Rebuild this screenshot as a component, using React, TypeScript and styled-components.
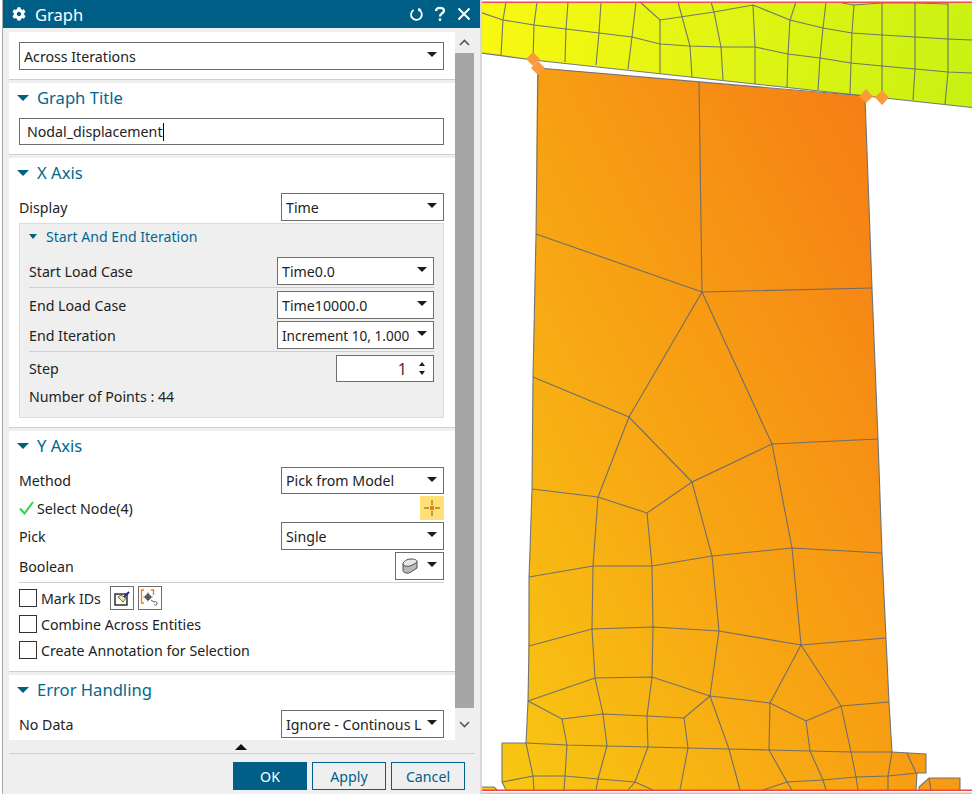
import React from "react";
import styled, { createGlobalStyle } from "styled-components";
import { FaCog } from "react-icons/fa";

const Global = createGlobalStyle`
  html, body { margin: 0; padding: 0; background: #fff; }
  body { font-family: "Noto Sans", "Open Sans", Arial, sans-serif; }
  * { box-sizing: border-box; }
`;

const Page = styled.div`
  width: 972px; height: 794px; display: flex; overflow: hidden; background: #fff; padding-left: 2px;
`;
const Dialog = styled.div`
  width: 478px; height: 794px; display: flex; flex-direction: column; background: #efefef;
  border-left: 1px solid #a9a9a9; flex: none;
`;
const TitleBar = styled.div`
  height: 28px; background: #005f87; color: #fff; display: flex; align-items: center; padding: 0 4px 0 9px; flex: none;
`;
const TitleText = styled.span`
  font-size: 16.5px; margin-left: 9px; flex: 1; margin-top: 1px;
`;
const TitleIcons = styled.div`
  display: flex; align-items: center; gap: 0;
`;
const TitleIcon = styled.span`
  width: 24px; height: 28px; display: flex; align-items: center; justify-content: center;
`;
const Body = styled.div`
  height: 712px; padding: 4px 5px 0 6px; display: flex; flex: none;
`;
const Form = styled.div`
  width: 446px; display: flex; flex-direction: column;
`;
const Section = styled.section<{ $pad?: number; $sep?: boolean }>`
  background: #fff; padding: 0 11px ${p => p.$pad ?? 9}px 10px;
  ${p => (p.$sep === false ? "" : "border-bottom: 1px solid #cfcfcf; margin-bottom: 3px;")}
`;
const FirstPad = styled.div`
  height: 10px;
`;
const Header = styled.div`
  height: 30px; display: flex; align-items: center; margin-left: -2px; padding-bottom: 1px;
  color: #00688f; font-size: 16.6px;
`;
const Caret = styled.span<{ $small?: boolean }>`
  width: 0; height: 0; flex: none; display: block;
  border-left: ${p => (p.$small ? 4.5 : 6)}px solid transparent;
  border-right: ${p => (p.$small ? 4.5 : 6)}px solid transparent;
  border-top: ${p => (p.$small ? 5 : 6)}px solid #00607f;
  margin-right: ${p => (p.$small ? 9 : 8)}px;
`;
const Row = styled.div<{ $h?: number; $mt?: number }>`
  display: flex; align-items: center; justify-content: space-between;
  height: ${p => p.$h ?? 28}px; margin-top: ${p => p.$mt ?? 0}px;
`;
const Label = styled.span<{ $ml?: number }>`
  font-size: 14.2px; color: #222; white-space: nowrap; margin-left: ${p => p.$ml ?? 0}px;
`;
const SelectBox = styled.div<{ $w?: number }>`
  width: ${p => (p.$w ? `${p.$w}px` : "100%")}; height: 100%; border: 1px solid #6e6e6e; background: #fff;
  display: flex; align-items: center; padding: 0 6px 0 4px; flex: none;
`;
const SelectText = styled.span<{ $fs?: number }>`
  flex: 1; font-size: ${p => p.$fs ?? 14.2}px; color: #222; white-space: nowrap; overflow: hidden;
`;
const DropArrow = styled.span`
  width: 0; height: 0; flex: none; margin-left: 4px; margin-top: -3px;
  border-left: 5px solid transparent; border-right: 5px solid transparent; border-top: 5px solid #1c1c1c;
`;
const TextInput = styled.div`
  height: 27px; margin-top: 5px; border: 1px solid #6e6e6e; background: #fff; display: flex; align-items: center; padding-left: 7px;
  font-size: 14.2px; color: #222;
`;
const Cursor = styled.span`
  display: inline-block; width: 1px; height: 18px; background: #000;
`;
const Group = styled.div`
  margin-top: 2px; height: 195px; background: #efefef; border: 1px solid #dcdcdc; padding: 0 9px;
`;
const GroupHeader = styled.div`
  height: 26px; display: flex; align-items: center; color: #00688f; font-size: 14.1px;
  margin: 0 0 7px 0; padding-bottom: 2px;
`;
const Rule = styled.div<{ $mt?: number; $mb?: number; $c?: string }>`
  height: 1px; background: ${p => p.$c ?? "#cfcfcf"}; margin-top: ${p => p.$mt ?? 0}px; margin-bottom: ${p => p.$mb ?? 0}px;
`;
const Spinner = styled.div`
  width: 98px; height: 27px; border: 1px solid #6e6e6e; background: #fff; display: flex; align-items: center; justify-content: flex-end;
  padding-right: 8px; font-size: 16px; color: #5a2b33;
`;
const SpinValue = styled.span`
  margin-right: 12px;
`;
const SpinArrows = styled.span`
  display: flex; flex-direction: column; gap: 5px;
`;
const SpinUp = styled.span`
  display: block; width: 0; height: 0; border-left: 3.5px solid transparent; border-right: 3.5px solid transparent; border-bottom: 4px solid #1c1c1c;
`;
const SpinDown = styled.span`
  display: block; width: 0; height: 0; border-left: 3.5px solid transparent; border-right: 3.5px solid transparent; border-top: 4px solid #1c1c1c;
`;
const NodeLabel = styled.span`
  display: flex; align-items: center; gap: 3px;
`;
const Crosshair = styled.div`
  width: 24px; height: 24px; background: #ffdf76; display: flex; align-items: center; justify-content: center;
`;
const CheckRow = styled.div<{ $mt?: number }>`
  display: flex; align-items: center; height: 18px; margin-top: ${p => p.$mt ?? 0}px; gap: 4px;
`;
const CheckBox = styled.span`
  width: 18px; height: 18px; border: 1px solid #333; background: #fff; flex: none;
`;
const ToolRow = styled.div`
  display: flex; align-items: center; height: 24px; margin-top: 3px;
`;
const ToolBtn = styled.span<{ $ml: number }>`
  width: 24px; height: 24px; border: 1px solid #6e6e6e; background: #fff; margin-left: ${p => p.$ml}px;
  display: flex; align-items: center; justify-content: center; flex: none;
`;
const Scroll = styled.div`
  width: 20px; display: flex; flex-direction: column; align-items: stretch;
`;
const ScrollCap = styled.div<{ $h: number }>`
  height: ${p => p.$h}px; display: flex; align-items: center; justify-content: center; flex: none; padding-right: 1px;
`;
const Thumb = styled.div`
  height: 655px; background: #a6a6a6; width: 19px; flex: none;
`;
const Footer = styled.div`
  flex: 1; padding: 0 5px 0 6px; display: flex; flex-direction: column;
`;
const Collapse = styled.div`
  height: 14px; width: 466px; display: flex; justify-content: center; align-items: center;
  border-bottom: 1px solid #cfcfcf; padding-top: 1px;
`;
const CollapseArrow = styled.span`
  width: 0; height: 0; border-left: 6px solid transparent; border-right: 6px solid transparent; border-bottom: 6px solid #111; margin-right: 2px;
`;
const Buttons = styled.div`
  display: flex; justify-content: flex-end; gap: 5px; margin-top: 8px; padding-right: 10px;
`;
const Btn = styled.button<{ $primary?: boolean }>`
  width: 74px; height: 28px; padding: 0; font: inherit; font-size: 14.2px;
  border: 1px solid #00608a; background: ${p => (p.$primary ? "#005f87" : "#efefef")};
  color: ${p => (p.$primary ? "#fff" : "#00608a")};
`;
const Viewport = styled.div`
  flex: 1; height: 794px; background: #fff; border-left: 2px solid #d8d8d8; overflow: hidden;
`;
const MeshSvg = styled.svg`
  display: block; margin-left: -482px;
`;

const Select: React.FC<{ text: string; w?: number; fs?: number }> = ({ text, w, fs }) => (
  <SelectBox $w={w}>
    <SelectText $fs={fs}>{text}</SelectText>
    <DropArrow />
  </SelectBox>
);

const mesh: string[] = [
  "481,12.5 503,20 534,25 566,29 599,33 632,37 660,44 690,46 721,47 755,47 788,54 820,58 851,63 882,66 915,69 948,72 972,73",
  "640,2 660,20 714,12 753,5 790,20 823,28 852,33 882,35 915,37 948,39 972,40",
  "842,3 854,5 882,3 915,3 948,4",
  "506,2 503,20 501,55", "537,2 534,25 533,62", "568,2 566,29 565,62", "601,2 599,33 596,65",
  "636,2 632,37 628,69", "660,20 660,44 660,73", "678,2 690,46 692,77", "711,2 714,12 721,47 723,80",
  "753,5 755,47 755,84", "796,2 790,20 788,54 787,87", "826,2 823,28 820,58 818,90", "854,5 852,33 851,63 850,94",
  "882,2 882,35 882,66 882,97", "915,2 915,37 915,69 913,100", "948,2 948,39 948,72 945,104",
  "481,53 533,60 866,96 972,107.5",
  "538,68 536,234 533,377 532,489 530,550 529,577 529,646 528,701 526,743",
  "865,96 872,288 878,439 882,553 886,638 889,702 892,752",
  "538,68 865,96",
  "699,82 702,292", "536,234 702,292 872,288", "702,292 629,417 598,497", "702,292 772,444 878,439",
  "533,377 629,417 692,482 772,444", "532,489 598,497 647,513 692,482",
  "598,497 593,566", "647,513 652,566", "692,482 712,556", "772,444 792,548",
  "529,577 593,566 652,566 712,556 792,548 882,553",
  "529,646 592,629 653,627 719,631 801,645 886,638",
  "593,566 592,629 595,678", "652,566 653,627 652,677", "712,556 719,631 710,696", "792,548 801,645 770,703",
  "801,645 841,706",
  "528,701 595,678 652,677 710,696 770,703 806,721 841,706 889,702",
  "528,701 562,719 603,714 647,716 684,718 710,696",
  "595,678 603,714 607,746", "652,677 647,716 648,747",
  "562,719 567,745", "684,718 688,748", "710,696 729,749", "770,703 769,750", "806,721 810,751", "841,706 851,752",
  "502,743 526,743 567,745 607,746 648,747 688,748 729,749 769,750 810,751 851,752 892,752 926,754 926,773 917,773 916,790",
  "502,743 502,782 506,790",
  "502,782 533,776 565,776 598,779 635,782 653,790",
  "526,743 533,776 534,790", "567,745 565,776 564,790", "607,746 598,779 596,790", "648,747 635,782 628,790",
  "688,748 680,790", "729,749 740,790", "769,750 787,782 792,790", "763,790 787,782 823,780 856,777 888,776 917,773",
  "810,751 823,780 826,790", "851,752 856,777 858,790", "892,752 888,776 888,790", "907,753 916,773",
  "919,790 919,787 929,778 960,778 960,790", "929,778 931,790", "481,787 494,787 497,790",
];

const Viewmesh: React.FC = () => (
  <MeshSvg width={972} height={794} viewBox="0 0 972 794">
    <defs>
      <linearGradient id="plate" gradientUnits="userSpaceOnUse" x1={480} y1={0} x2={972} y2={100}>
        <stop offset="0" stopColor="#f9f812" />
        <stop offset="1" stopColor="#c9f114" />
      </linearGradient>
      <linearGradient id="body" gradientUnits="userSpaceOnUse" x1={500} y1={790} x2={1104} y2={474}>
        <stop offset="0" stopColor="#f8c812" />
        <stop offset="1" stopColor="#f67a15" />
      </linearGradient>
    </defs>
    <polygon points="480,2 972,2 972,107.5 866,96 533,60 480,53" fill="url(#plate)" />
    <polygon
      fill="url(#body)"
      points="540,68 860,96 865,99 872,288 878,439 882,553 886,638 889,702 892,752 926,754 926,773 917,773 916,790 506,790 502,782 502,743 526,743 528,701 529,577 530,550 532,489 533,377 536,234 537,72"
    />
    <polygon fill="url(#body)" points="919,790 919,787 929,778 960,778 960,790" />
    <polygon fill="#f8c812" points="481,787 494,787 497,790 481,790" />
    <g fill="none" stroke="#5f6775" strokeWidth={1.1} strokeOpacity={0.88}>
      {mesh.map((p, i) => (
        <polyline key={i} points={p} />
      ))}
    </g>
    <rect x={481} y={1.5} width={491} height={1.5} fill="#ee4a5a" />
    <rect x={481} y={789.5} width={491} height={1.5} fill="#f6433f" />
    <rect x={481} y={792.5} width={491} height={1.5} fill="#c4c4c4" />
    <g fill="#fb9a3c">
      <polygon points="533,52 540,59 533,66 526,59" />
      <polygon points="538,61 545,68 538,75 531,68" />
      <polygon points="866,89 873,96.500 866,103 859,96.500" />
      <polygon points="882,90 889,97.500 882,105 875,97.500" />
    </g>
  </MeshSvg>
);

export default function App() {
  return (
    <>
      <Global />
      <Page>
        <Dialog>
          <TitleBar>
            <FaCog size={14} color="#fff" />
            <TitleText>Graph</TitleText>
            <TitleIcons>
              <TitleIcon>
                <svg width="15" height="15" viewBox="0 0 15 15" fill="none" stroke="#fff" strokeWidth="1.8">
                  <path d="M4.600 2.900 A5.400 5.400 0 1 0 9.700 2.600" />
                  <path d="M9.300 0.800 L9.300 4.400 L12.600 2.600 Z" fill="#fff" stroke="none" />
                </svg>
              </TitleIcon>
              <TitleIcon>
                <svg width="12" height="16" viewBox="0 0 12 16" fill="none" stroke="#fff" strokeWidth="2.300">
                  <path d="M2 5 C2 0.800 10 0.800 10 4.700 C10 7.300 6 7.300 6 10.400" />
                  <path d="M6 12.300 V15" />
                </svg>
              </TitleIcon>
              <TitleIcon>
                <svg width="14" height="14" viewBox="0 0 14 14" stroke="#fff" strokeWidth="2">
                  <path d="M1.500 1.500 L12.500 12.500 M12.500 1.500 L1.500 12.500" />
                </svg>
              </TitleIcon>
            </TitleIcons>
          </TitleBar>
          <Body>
            <Form>
              <Section>
                <FirstPad />
                <Row>
                  <Select text="Across Iterations" />
                </Row>
              </Section>
              <Section>
                <Header><Caret />Graph Title</Header>
                <TextInput>Nodal_displacement<Cursor /></TextInput>
              </Section>
              <Section>
                <Header><Caret />X Axis</Header>
                <Row $mt={5}>
                  <Label>Display</Label>
                  <Select text="Time" w={163} />
                </Row>
                <Group>
                  <GroupHeader><Caret $small />Start And End Iteration</GroupHeader>
                  <Row>
                    <Label>Start Load Case</Label>
                    <Select text="Time0.0" w={157} />
                  </Row>
                  <Rule $mt={2} $mb={3} />
                  <Row>
                    <Label>End Load Case</Label>
                    <Select text="Time10000.0" w={157} />
                  </Row>
                  <Row $mt={2}>
                    <Label>End Iteration</Label>
                    <Select text="Increment 10, 1.000" w={157} fs={13.6} />
                  </Row>
                  <Rule $mt={2} $mb={3} />
                  <Row $h={27}>
                    <Label>Step</Label>
                    <Spinner>
                      <SpinValue>1</SpinValue>
                      <SpinArrows><SpinUp /><SpinDown /></SpinArrows>
                    </Spinner>
                  </Row>
                  <Row>
                    <Label>Number of Points : 44</Label>
                  </Row>
                </Group>
              </Section>
              <Section $pad={12}>
                <Header><Caret />Y Axis</Header>
                <Row $mt={6} $h={27}>
                  <Label>Method</Label>
                  <Select text="Pick from Model" w={163} />
                </Row>
                <Row $mt={2} $h={24}>
                  <NodeLabel>
                    <svg width="15" height="14" viewBox="0 0 15 14" fill="none" stroke="#2fd24a" strokeWidth="2">
                      <path d="M1 7.500 L5.500 12.500 L14 1" />
                    </svg>
                    <Label>Select Node(4)</Label>
                  </NodeLabel>
                  <Crosshair>
                    <svg width="16" height="16" viewBox="0 0 16 16" fill="none">
                      <path d="M0 8 H5 M11 8 H16 M8 0 V5 M8 11 V16" stroke="#6a5a20" strokeWidth="1" />
                      <rect x="6" y="6" width="4" height="4" fill="#ee7d1a" />
                    </svg>
                  </Crosshair>
                </Row>
                <Row $mt={2}>
                  <Label>Pick</Label>
                  <Select text="Single" w={163} />
                </Row>
                <Row $mt={2}>
                  <Label>Boolean</Label>
                  <SelectBox $w={49}>
                    <svg width="16" height="16" viewBox="0 0 16 16" style={{ flex: "none", marginLeft: 2 }}>
                      <path d="M1 6 V12.500 C1 14.500 4 15.500 6.500 15 C8 14.800 9.500 14 10.500 13 L15 10 V3.500 L1 6 Z" fill="#b9b9b9" stroke="#4a4a4a" strokeWidth="1" />
                      <path d="M1 6 C1 3.500 5 1 9 1 C12.500 1 15 2 15 3.500 C15 5 12 6 10 7 C8 8.800 1 9 1 6 Z" fill="#e8e8e8" stroke="#4a4a4a" strokeWidth="1" />
                    </svg>
                    <SelectText />
                    <DropArrow />
                  </SelectBox>
                </Row>
                <Rule $mt={2} $mb={3} />
                <ToolRow>
                  <CheckBox />
                  <Label $ml={4}>Mark IDs</Label>
                  <ToolBtn $ml={9}>
                    <svg width="16" height="15" viewBox="0 0 16 15" fill="none">
                      <rect x="1" y="3" width="12" height="11" fill="#fff" stroke="#111" strokeWidth="1.300" />
                      <path d="M4 6 L9 11 L12 7 L7 4 Z" fill="#f3e7a0" stroke="#333" strokeWidth="0.700" />
                      <path d="M10 6 L15 1" stroke="#1a2a9a" strokeWidth="2" />
                    </svg>
                  </ToolBtn>
                  <ToolBtn $ml={4}>
                    <svg width="20" height="20" viewBox="0 0 20 20" fill="none">
                      <path d="M4 2 H1.500 V15 H4 M11 2 H13.500 V7" stroke="#ef7b14" strokeWidth="1.300" />
                      <circle cx="8" cy="9" r="2.600" fill="#999" stroke="#333" strokeWidth="0.800" />
                      <path d="M8 4.500 V13.500 M3.500 9 H12.500" stroke="#222" strokeWidth="0.800" />
                      <path d="M11 12 L14 14 M14 14 C16 13 17.500 14.500 17 16 C16.500 17.500 14.500 17.500 14 16.500" stroke="#555" strokeWidth="1" />
                    </svg>
                  </ToolBtn>
                </ToolRow>
                <CheckRow $mt={5}>
                  <CheckBox />
                  <Label>Combine Across Entities</Label>
                </CheckRow>
                <CheckRow $mt={8}>
                  <CheckBox />
                  <Label>Create Annotation for Selection</Label>
                </CheckRow>
              </Section>
              <Section $pad={2} $sep={false}>
                <Header><Caret />Error Handling</Header>
                <Row $mt={5}>
                  <Label>No Data</Label>
                  <Select text="Ignore - Continous L" w={163} />
                </Row>
              </Section>
            </Form>
            <Scroll>
              <ScrollCap $h={21}>
                <svg width="11" height="7" viewBox="0 0 11 7" fill="none" stroke="#555" strokeWidth="1.600"><path d="M1 6 L5.500 1.500 L10 6" /></svg>
              </ScrollCap>
              <Thumb />
              <ScrollCap $h={32}>
                <svg width="11" height="7" viewBox="0 0 11 7" fill="none" stroke="#555" strokeWidth="1.600"><path d="M1 1 L5.500 5.500 L10 1" /></svg>
              </ScrollCap>
            </Scroll>
          </Body>
          <Footer>
            <Collapse><CollapseArrow /></Collapse>
            <Buttons>
              <Btn $primary>OK</Btn>
              <Btn>Apply</Btn>
              <Btn>Cancel</Btn>
            </Buttons>
          </Footer>
        </Dialog>
        <Viewport>
          <Viewmesh />
        </Viewport>
      </Page>
    </>
  );
}
